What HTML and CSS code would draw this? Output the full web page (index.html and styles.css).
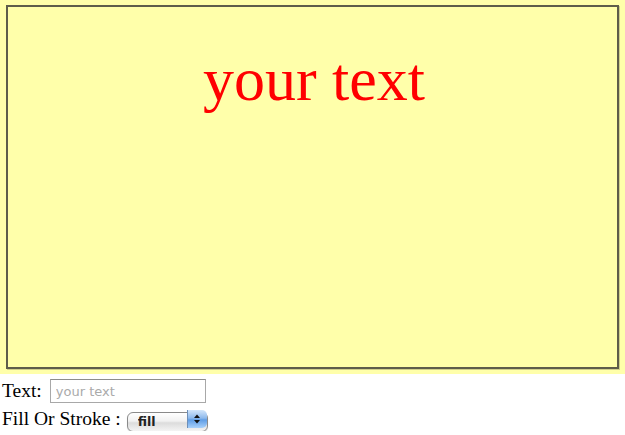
FILE: index.html
```html
<!DOCTYPE html>
<html>
<head>
<meta charset="utf-8">
<link rel="stylesheet" href="styles.css">
</head>
<body>
<div class="stage">
  <div class="canvas">
    <div class="headline">your text</div>
  </div>
</div>
<form class="controls">
  <div class="row row-text">
    <label class="lbl" for="t">Text:</label>
    <input id="t" class="field" type="text" placeholder="your text">
  </div>
  <div class="row row-fill">
    <label class="lbl lbl-fill" for="f">Fill Or Stroke :</label>
    <div class="select-wrap">
      <select id="f" class="picker"><option>fill</option><option>stroke</option></select>
      <span class="stepper">
        <svg width="8" height="12" viewBox="0 0 8 12"><path d="M4 1.5 L7 5 L1 5 Z" fill="#111"/><path d="M4 10.5 L7 7 L1 7 Z" fill="#111"/></svg>
      </span>
    </div>
  </div>
</form>
</body>
</html>
```
FILE: styles.css
```css
html, body {
  margin: 0;
  padding: 0;
  background: #ffffff;
}
body {
  font-family: "Liberation Serif", "Times New Roman", serif;
  color: #000;
}
.stage {
  background: #ffffaa;
  padding: 5px 6px 5px 6px;
}
.canvas {
  box-sizing: border-box;
  height: 364px;
  border: 2px solid #5e5d4a;
  box-shadow: 1px 1px 0 rgba(120,120,80,0.35);
}
.headline {
  text-align: center;
  color: #ff0000;
  font-size: 62px;
  line-height: 1;
  padding-top: 41px;
  padding-left: 3px;
}
.controls {
  margin: 0;
  padding: 0 0 0 2px;
  font-size: 19.5px;
}
.row {
  display: flex;
  align-items: center;
}
.row-text {
  height: 32px;
  padding-top: 1px;
}
.row-fill {
  height: 24px;
}
.lbl {
  line-height: 1;
  margin-right: 8px;
}
.lbl-fill {
  margin-right: 6px;
}
.field {
  box-sizing: border-box;
  width: 156px;
  height: 24px;
  border: 1px solid #a8a8a8;
  border-top-color: #8c8c8c;
  padding: 2px 5px;
  font-family: "DejaVu Sans", sans-serif;
  font-size: 13px;
  color: #333;
  background: #fff;
  outline: none;
}
.field::placeholder {
  color: #aaa;
}
.select-wrap {
  position: relative;
  width: 81px;
  height: 20px;
}
.picker {
  -webkit-appearance: none;
  appearance: none;
  box-sizing: border-box;
  width: 81px;
  height: 20px;
  margin: 0;
  border: 1px solid #8a8a8a;
  border-radius: 6px;
  padding: 0 0 0 10px;
  font-family: "DejaVu Sans", sans-serif;
  font-size: 12.5px;
  font-weight: 600;
  color: #222;
  background: linear-gradient(#ffffff, #f1f1f1 45%, #dcdcdc 55%, #f4f4f4);
  box-shadow: 0 1px 1px rgba(0,0,0,0.15);
  outline: none;
}
.stepper {
  position: absolute;
  top: 1px;
  right: 1px;
  width: 19px;
  height: 18px;
  border-radius: 0 5px 5px 0;
  border-left: 1px solid #6d8fb8;
  background: linear-gradient(#d3e6fb, #8db9ec 45%, #5f9de5 55%, #a9d1fb);
  display: flex;
  align-items: center;
  justify-content: center;
  pointer-events: none;
}
```
